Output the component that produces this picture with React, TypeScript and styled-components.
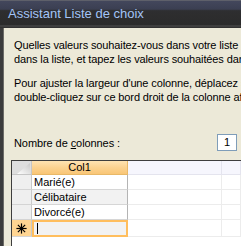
import { FC, Fragment } from 'react';
import styled, { createGlobalStyle } from 'styled-components';

const GlobalStyle = createGlobalStyle`
  html, body {
    margin: 0;
    padding: 0;
    overflow: hidden;
    background: #ece9d8;
  }
`;

const Window = styled.div`
  width: 241px;
  height: 246px;
  overflow: hidden;
  display: flex;
  flex-direction: column;
  font-family: 'Liberation Sans', Arial, sans-serif;
`;

const TitleBar = styled.div`
  height: 28px;
  flex: none;
  box-sizing: border-box;
  display: flex;
  align-items: center;
  padding: 0 0 2px 8px;
  border-top: 1px solid #5e606a;
  background: linear-gradient(
    to bottom,
    #43475c 0%,
    #3b3f52 30%,
    #2e2e30 36%,
    #2b2b2b 88%,
    #474747 92%,
    #2a2a2a 100%
  );
  color: #a3c4f7;
  font-size: 13px;
  white-space: nowrap;
`;

const Frame = styled.div`
  flex: 1;
  display: flex;
  min-height: 0;
`;

const FrameEdge = styled.div`
  width: 3px;
  flex: none;
  background: #3b3b3b;
  border-right: 1px solid #6c6b66;
`;

const Content = styled.div`
  flex: 1;
  display: flex;
  flex-direction: column;
  padding-top: 10px;
  min-width: 0;
  overflow: hidden;
`;

const Paragraph = styled.div`
  padding-left: 10px;
  font-size: 11px;
  line-height: 14px;
  color: #000;
  white-space: nowrap;
  letter-spacing: -0.12px;
  margin-bottom: 10px;
`;

const CountRow = styled.div`
  display: flex;
  align-items: center;
  height: 17px;
  margin-top: 20px;
  padding-left: 10px;
  font-size: 11px;
  letter-spacing: -0.08px;
`;

const Label = styled.span`
  width: 203px;
  flex: none;

  u {
    text-decoration: underline;
  }
`;

const CountBox = styled.div`
  width: 20px;
  height: 17px;
  flex: none;
  box-sizing: border-box;
  border: 1px solid #7f9db9;
  background: #fff;
  padding-left: 6px;
  line-height: 15px;
  font-size: 11px;
`;

const Grid = styled.div`
  margin: 9px 0 0 7px;
  flex: 1;
  display: grid;
  grid-template-columns: 20px 96px 94px 1fr;
  grid-auto-rows: 15px;
  grid-template-rows: 14px;
  border-top: 1px solid #3e3e3e;
  border-left: 1px solid #3e3e3e;
  background: #fff;
  align-content: start;
  font-size: 11px;
`;

const Corner = styled.div`
  background: #dedede;
  border-right: 1px solid #c6c6c6;
  border-bottom: 1px solid #c6c6c6;
  box-sizing: border-box;
  display: flex;
  align-items: flex-end;
  justify-content: flex-end;
`;

const HeadCell = styled.div<{ $active?: boolean }>`
  box-sizing: border-box;
  border-right: 1px solid ${({ $active }) => ($active ? '#e8b868' : '#e4e4ee')};
  border-bottom: 1px solid ${({ $active }) => ($active ? '#e8b868' : '#e4e4ee')};
  background: ${({ $active }) =>
    $active ? 'linear-gradient(to bottom, #fee3b2 0%, #fbd290 50%, #f9c676 100%)' : '#f6f6fd'};
  text-align: center;
  line-height: 13px;
  color: #000;
`;

const Selector = styled.div<{ $current?: boolean }>`
  box-sizing: border-box;
  border-right: 1px solid #c9c9c9;
  border-bottom: 1px solid #d4d4d4;
  background: ${({ $current }) => ($current ? '#ffd592' : '#efefef')};
  display: flex;
  align-items: center;
  justify-content: center;
  ${({ $current }) => $current && 'height: 17px;'}
`;

const Cell = styled.div<{ $alt?: boolean; $current?: boolean }>`
  box-sizing: border-box;
  padding-left: 2px;
  line-height: 14px;
  white-space: nowrap;
  background: ${({ $alt }) => ($alt ? '#f2f2f2' : '#fff')};
  border-right: 1px solid #b4b4b4;
  border-bottom: 1px solid #d6d6d6;
  ${({ $current }) =>
    $current &&
    `
    border: 2px solid #ffbe5e;
    height: 17px;
    display: flex;
    align-items: center;
  `}
`;

const Blank = styled.div<{ $tall?: boolean }>`
  box-sizing: border-box;
  border-right: 1px solid #ececec;
  border-bottom: 1px solid #ececec;
  ${({ $tall }) => $tall && 'height: 17px;'}
`;

const Caret = styled.span`
  display: block;
  width: 1px;
  height: 11px;
  margin-left: 1px;
  background: #000;
`;

const Star: FC = () => (
  <svg width="11" height="11" viewBox="0 0 11 11">
    <g stroke="#000" strokeWidth="1.2" strokeLinecap="square">
      <line x1="5.5" y1="1" x2="5.5" y2="10" />
      <line x1="1" y1="5.5" x2="10" y2="5.5" />
      <line x1="2.3" y1="2.3" x2="8.7" y2="8.7" />
      <line x1="8.7" y1="2.3" x2="2.3" y2="8.7" />
    </g>
  </svg>
);

const CornerMark: FC = () => (
  <svg width="16" height="11" viewBox="0 0 16 11">
    <defs>
      <linearGradient id="cm" x1="0" y1="1" x2="1" y2="0">
        <stop offset="0" stopColor="#ffffff" />
        <stop offset="1" stopColor="#c9c9c9" />
      </linearGradient>
    </defs>
    <polygon points="2,11 15,0 15,11" fill="url(#cm)" />
  </svg>
);

const values = ['Marié(e)', 'Célibataire', 'Divorcé(e)'];

export default function App() {
  return (
    <>
      <GlobalStyle />
      <Window>
        <TitleBar>Assistant Liste de choix</TitleBar>
        <Frame>
          <FrameEdge />
          <Content>
            <Paragraph>
              Quelles valeurs souhaitez-vous dans votre liste de choix ? Entrez le nombre de colonnes
              <br />
              dans la liste, et tapez les valeurs souhaitées dans chaque cellule.
            </Paragraph>
            <Paragraph>
              Pour ajuster la largeur d'une colonne, déplacez son bord droit jusqu'à la largeur voulue, ou
              <br />
              double-cliquez sur ce bord droit de la colonne afin d'obtenir le meilleur ajustement.
            </Paragraph>
            <CountRow>
              <Label>
                Nombre de <u>c</u>olonnes :
              </Label>
              <CountBox>1</CountBox>
            </CountRow>
            <Grid>
              <Corner>
                <CornerMark />
              </Corner>
              <HeadCell $active>Col1</HeadCell>
              <HeadCell />
              <HeadCell />
              {values.map((v, i) => (
                <Fragment key={v}>
                  <Selector />
                  <Cell $alt={i % 2 === 1}>{v}</Cell>
                  <Blank />
                  <Blank />
                </Fragment>
              ))}
              <Selector $current>
                <Star />
              </Selector>
              <Cell $alt $current>
                <Caret />
              </Cell>
              <Blank $tall />
              <Blank $tall />
            </Grid>
          </Content>
        </Frame>
      </Window>
    </>
  );
}
